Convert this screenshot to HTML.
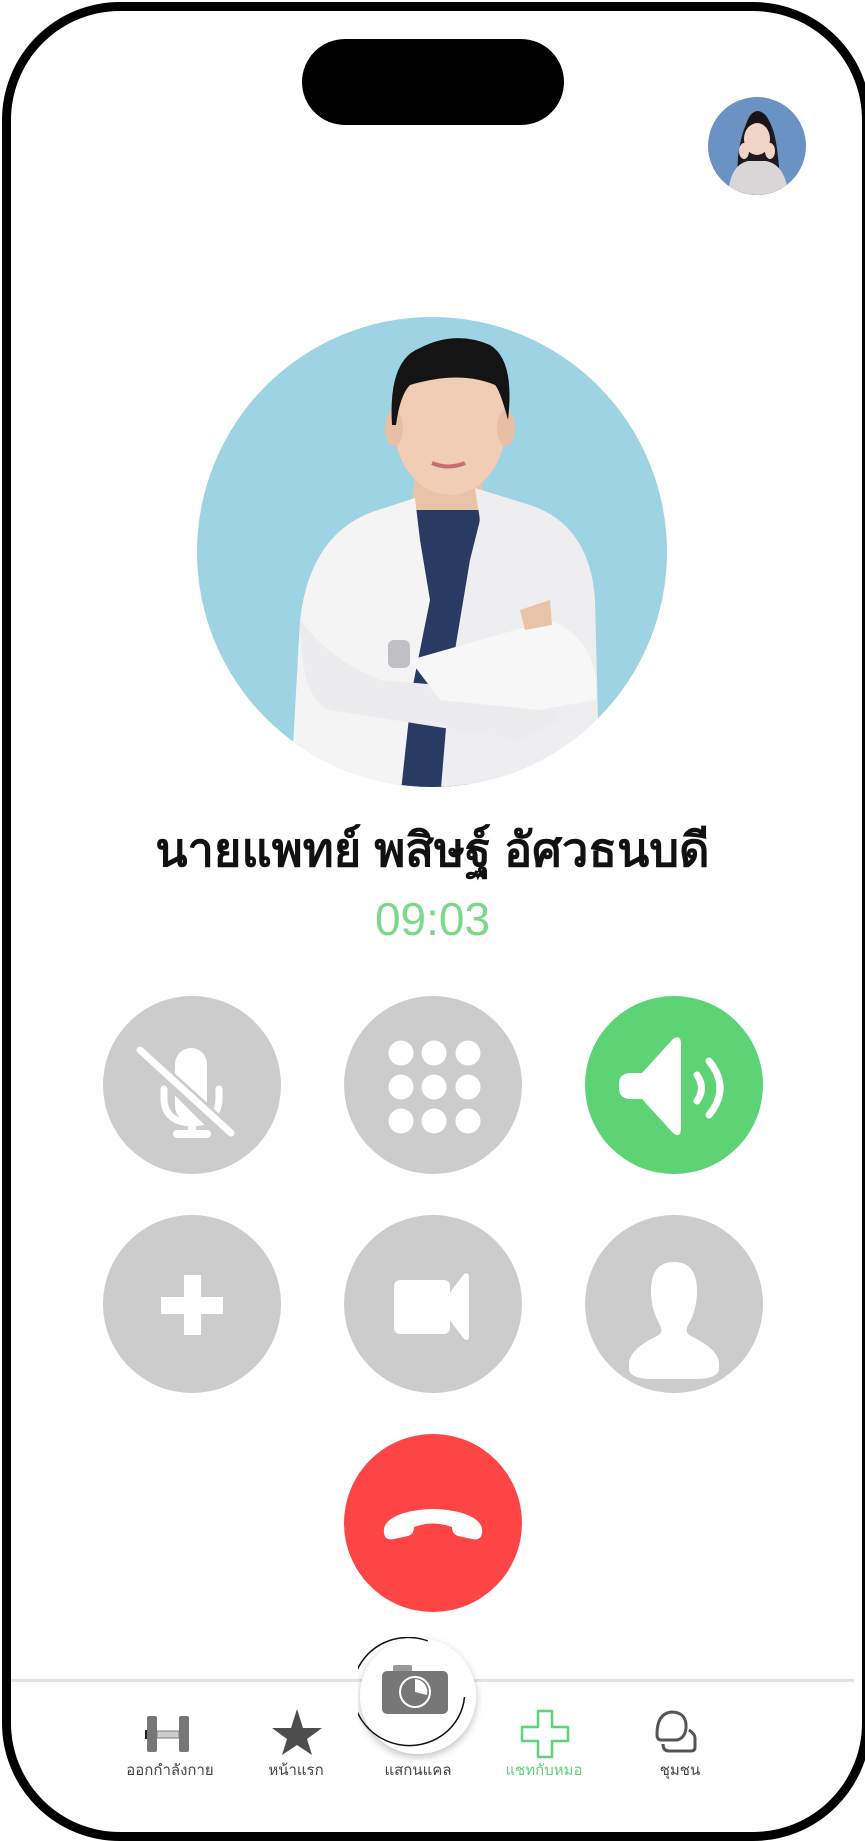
<!DOCTYPE html>
<html><head><meta charset="utf-8"><style>
html,body{margin:0;padding:0;background:#fff;}
body{width:865px;height:1835px;position:relative;overflow:hidden;font-family:"Liberation Sans","Noto Sans CJK SC",sans-serif;}
.frame{position:absolute;left:2px;top:2px;width:851px;height:1821px;border:9px solid #000;border-radius:118px;background:#fff;}
.notch{position:absolute;left:302px;top:39px;width:262px;height:86px;background:#000;border-radius:43px;}
.btn{position:absolute;width:178px;height:178px;border-radius:50%;background:#cccccc;}
.btn svg{position:absolute;left:0;top:0;}
.name{position:absolute;left:0;width:865px;top:812px;text-align:center;font-size:47px;font-weight:bold;color:#111;font-family:"Liberation Sans","Noto Sans CJK SC",sans-serif;}
.timer{position:absolute;left:0;width:865px;top:892px;text-align:center;font-size:46px;color:#7ed88a;font-family:"Liberation Sans",sans-serif;}
.line{position:absolute;left:11px;width:843px;top:1679px;height:3px;background:#e4e4e4;}
.lbl{position:absolute;top:1758px;font-size:15px;color:#444;width:120px;text-align:center;font-family:"Liberation Sans","Noto Sans CJK SC",sans-serif;}
</style></head><body>
<div class="frame"></div>
<div class="notch"></div>

<svg style="position:absolute;left:708px;top:97px" width="98" height="98" viewBox="0 0 98 98">
<defs><clipPath id="ca"><circle cx="49" cy="49" r="49"/></clipPath></defs>
<g clip-path="url(#ca)">
<rect width="98" height="98" fill="#6a93c4"/>
<path d="M28 98 L30 60 Q35 20 50 14 Q66 18 70 60 L74 98Z" fill="#1f1a1f"/>
<ellipse cx="49" cy="42" rx="13" ry="16" fill="#f0d4c6"/>
<path d="M36 36 Q40 14 50 14 Q62 16 63 36 Q56 24 48 26 Q40 28 36 36Z" fill="#1a1418"/>
<path d="M20 98 Q22 68 40 64 L58 64 Q78 68 80 98Z" fill="#d9d6d8"/>
<ellipse cx="36" cy="54" rx="5" ry="8" fill="#f0d4c6"/>
<ellipse cx="62" cy="54" rx="5" ry="8" fill="#f0d4c6"/>
</g></svg>

<svg style="position:absolute;left:197px;top:317px" width="470" height="470" viewBox="197 317 470 470">
<defs><clipPath id="cp"><circle cx="432" cy="552" r="235"/></clipPath></defs>
<g clip-path="url(#cp)">
<rect x="190" y="310" width="490" height="490" fill="#9dd3e2"/>
<path d="M415 470 L480 470 L488 530 L410 530Z" fill="#e9c3a8"/>
<path d="M410 510 L480 510 L470 800 L400 800Z" fill="#2a3b63"/>
<path d="M415 498 L372 512 Q310 535 300 620 L290 800 L400 800 L412 690 L430 600 L420 540Z" fill="#f4f4f5"/>
<path d="M475 488 L530 505 Q590 525 595 600 L598 720 L560 800 L440 800 L450 680 L470 560 L480 520Z" fill="#eeeef0"/>
<path d="M300 620 Q300 700 330 710 L520 740 L560 720 Q540 690 500 690 L380 680 Q330 660 300 620Z" fill="#ececee"/>
<path d="M410 660 L550 620 Q600 640 596 700 L540 710 L440 700Z" fill="#f7f7f8"/>
<path d="M520 610 L550 600 L552 625 L525 630Z" fill="#e9c3a8"/>
<rect x="388" y="640" width="22" height="28" rx="6" fill="#c0c0c4"/>
<ellipse cx="450" cy="425" rx="56" ry="70" fill="#f0cdb4"/>
<ellipse cx="394" cy="428" rx="9" ry="18" fill="#e8bea4"/>
<ellipse cx="506" cy="428" rx="9" ry="18" fill="#e8bea4"/>
<path d="M392 425 Q388 360 420 348 Q455 330 490 345 Q515 360 508 420 Q500 390 495 385 Q460 370 410 385 Q400 395 396 425Z" fill="#141414"/>
<path d="M432 463 Q448 470 465 463" stroke="#c57070" stroke-width="4" fill="none"/>
</g></svg>

<div class="name">นายแพทย์ พสิษฐ์ อัศวธนบดี</div>
<div class="timer">09:03</div>

<div class="btn" style="left:103px;top:996px">
<svg width="178" height="178" viewBox="0 0 178 178">
<rect x="72" y="52" width="32" height="74" rx="16" fill="#fff"/>
<path d="M61 93 L61 102 Q61 126 89 127 Q116 126 116 102 L116 93" stroke="#fff" stroke-width="7" fill="none" stroke-linecap="round"/>
<rect x="85" y="125" width="8" height="12" fill="#fff"/>
<rect x="70" y="134" width="38" height="8" rx="4" fill="#fff"/>
<line x1="30" y1="49" x2="130" y2="149" stroke="#cccccc" stroke-width="12"/>
<line x1="37" y1="55" x2="138" y2="136" stroke="none"/>
<line x1="38" y1="55" x2="139" y2="137" stroke="#fff" stroke-width="0"/>
<line x1="37" y1="54" x2="138" y2="135" stroke="none"/>
<path d="M37 55 L139 137" stroke="none"/>
<line x1="37" y1="55" x2="138" y2="137" stroke="none"/>
<line x1="38" y1="55" x2="138" y2="137" stroke="none"/>
<line x1="37" y1="55" x2="137" y2="137" stroke="none"/>
<line x1="37" y1="55" x2="137" y2="136" stroke="none"/>
<line x1="38" y1="56" x2="138" y2="136" stroke="none"/>
<line x1="38" y1="56" x2="137" y2="136" stroke="none"/>
<line x1="38" y1="56" x2="138" y2="137" stroke="none"/>
<line x1="38" y1="56" x2="138" y2="136" stroke="none"/>
<line x1="38" y1="55" x2="138" y2="136" stroke="none"/>
<line x1="38" y1="55" x2="138" y2="136" stroke="none"/>
</svg>
<svg width="178" height="178" viewBox="0 0 178 178" style="position:absolute;left:0;top:0">
<line x1="38" y1="56" x2="127" y2="137" stroke="#cccccc" stroke-width="14"/>
<line x1="38" y1="55" x2="131" y2="137" stroke="none"/>
<line x1="37" y1="54" x2="128" y2="137" stroke="#fff" stroke-width="7" stroke-linecap="round"/>
</svg></div>
<div class="btn" style="left:344px;top:996px">
<svg width="178" height="178" viewBox="0 0 178 178" fill="#fff">
<circle cx="57" cy="57" r="12.5"/><circle cx="90" cy="57" r="12.5"/><circle cx="124" cy="57" r="12.5"/>
<circle cx="57" cy="91" r="12.5"/><circle cx="90" cy="91" r="12.5"/><circle cx="124" cy="91" r="12.5"/>
<circle cx="57" cy="125" r="12.5"/><circle cx="90" cy="125" r="12.5"/><circle cx="124" cy="125" r="12.5"/>
</svg></div>
<div class="btn" style="left:585px;top:996px;background:#5dd375">
<svg width="178" height="178" viewBox="0 0 178 178">
<path d="M46 77 L57 77 L88 43 Q96 38 96 48 L96 132 Q96 143 88 137 L57 103 L46 103 Q34 103 34 92 L34 88 Q34 77 46 77Z" fill="#fff"/>
<path d="M112 79 Q121 92 112 105" stroke="#fff" stroke-width="7" fill="none" stroke-linecap="round"/>
<path d="M124 65 Q146 92 124 119" stroke="#fff" stroke-width="7" fill="none" stroke-linecap="round"/>
</svg></div>

<div class="btn" style="left:103px;top:1215px">
<svg width="178" height="178" viewBox="0 0 178 178" fill="#fff">
<rect x="81" y="60" width="17" height="60"/><rect x="58" y="82" width="62" height="17"/>
</svg></div>
<div class="btn" style="left:344px;top:1215px">
<svg width="178" height="178" viewBox="0 0 178 178" fill="#fff">
<rect x="50" y="65" width="56" height="54" rx="6"/>
<path d="M104 80 L120 59 Q125 56 125 63 L125 121 Q125 127 120 124 L104 103Z"/>
</svg></div>
<div class="btn" style="left:585px;top:1215px">
<svg width="178" height="178" viewBox="0 0 178 178" fill="#fff">
<path d="M89 47 Q66 47 66 76 Q66 95 75 110 Q79 118 72 121 Q45 134 44 148 L44 155 Q46 164 68 164 L110 164 Q132 164 134 155 L134 148 Q133 134 106 121 Q99 118 103 110 Q112 95 112 76 Q112 47 89 47Z"/>
</svg></div>

<div class="btn" style="left:344px;top:1434px;background:#fd4545">
<svg width="178" height="178" viewBox="0 0 178 178">
<path d="M40 99 Q38 86 60 79 Q89 71 118 79 Q140 86 138 99 Q137 107 128 105 L114 102 Q108 100 108 93 Q89 86 70 93 Q70 100 64 102 L50 105 Q41 107 40 99Z" fill="#fff"/>
</svg></div>

<div class="line"></div>
<svg style="position:absolute;left:358px;top:1637px" width="124" height="124" viewBox="0 0 124 124">
<defs><filter id="sh" x="-20%" y="-20%" width="140%" height="140%"><feDropShadow dx="0" dy="3" stdDeviation="4" flood-color="#000" flood-opacity="0.25"/></filter></defs>
<circle cx="60" cy="59" r="58" fill="#fff" filter="url(#sh)"/>
<path d="M60 3 A56 54 0 1 0 106 52" stroke="#111" stroke-width="1.5" fill="none" transform="rotate(10 60 59)"/>
<rect x="35" y="28" width="19" height="9" rx="2" fill="#999"/>
<rect x="24" y="34" width="66" height="43" rx="5" fill="#777"/>
<circle cx="57" cy="55" r="15" fill="none" stroke="#fff" stroke-width="2"/>
<path d="M57 55 L57 42 A13 13 0 0 1 69 58Z" fill="#fff"/>
</svg>

<svg style="position:absolute;left:145px;top:1715px" width="50" height="38" viewBox="0 0 50 38">
<rect x="2" y="1" width="10" height="36" rx="2" fill="#777"/>
<rect x="34" y="1" width="10" height="36" rx="2" fill="#777"/>
<rect x="12" y="16" width="22" height="7" fill="#ccc" stroke="#777" stroke-width="1"/>
<rect x="0" y="15" width="2" height="9" fill="#222"/>
</svg>
<svg style="position:absolute;left:272px;top:1708px" width="50" height="48" viewBox="0 0 50 48">
<path d="M25 1 L31 20 L50 20 L35 31 L40 47 L25 37 L10 47 L15 31 L0 20 L19 20Z" fill="#4d4d4d"/>
</svg>
<svg style="position:absolute;left:520px;top:1709px" width="50" height="50" viewBox="0 0 50 50">
<path d="M18 2 L32 2 L32 18 L48 18 L48 32 L32 32 L32 48 L18 48 L18 32 L2 32 L2 18 L18 18Z" fill="none" stroke="#5dd375" stroke-width="2.5" stroke-linejoin="round"/>
</svg>
<svg style="position:absolute;left:655px;top:1708px" width="50" height="50" viewBox="0 0 50 50">
<path d="M6 32 Q2 32 2 26 Q2 6 16 4 Q32 4 31 20 Q30 30 22 32Z" fill="none" stroke="#555" stroke-width="3" stroke-linejoin="round"/>
<path d="M34 22 Q40 26 40 30 L40 39 Q40 43 36 43 L14 43 Q8 43 8 36" fill="none" stroke="#555" stroke-width="3" stroke-linejoin="round"/>
</svg>

<div class="lbl" style="left:110px">ออกกำลังกาย</div>
<div class="lbl" style="left:236px">หน้าแรก</div>
<div class="lbl" style="left:358px">แสกนแคล</div>
<div class="lbl" style="left:484px;color:#5dd375">แชทกับหมอ</div>
<div class="lbl" style="left:620px">ชุมชน</div>
</body></html>
